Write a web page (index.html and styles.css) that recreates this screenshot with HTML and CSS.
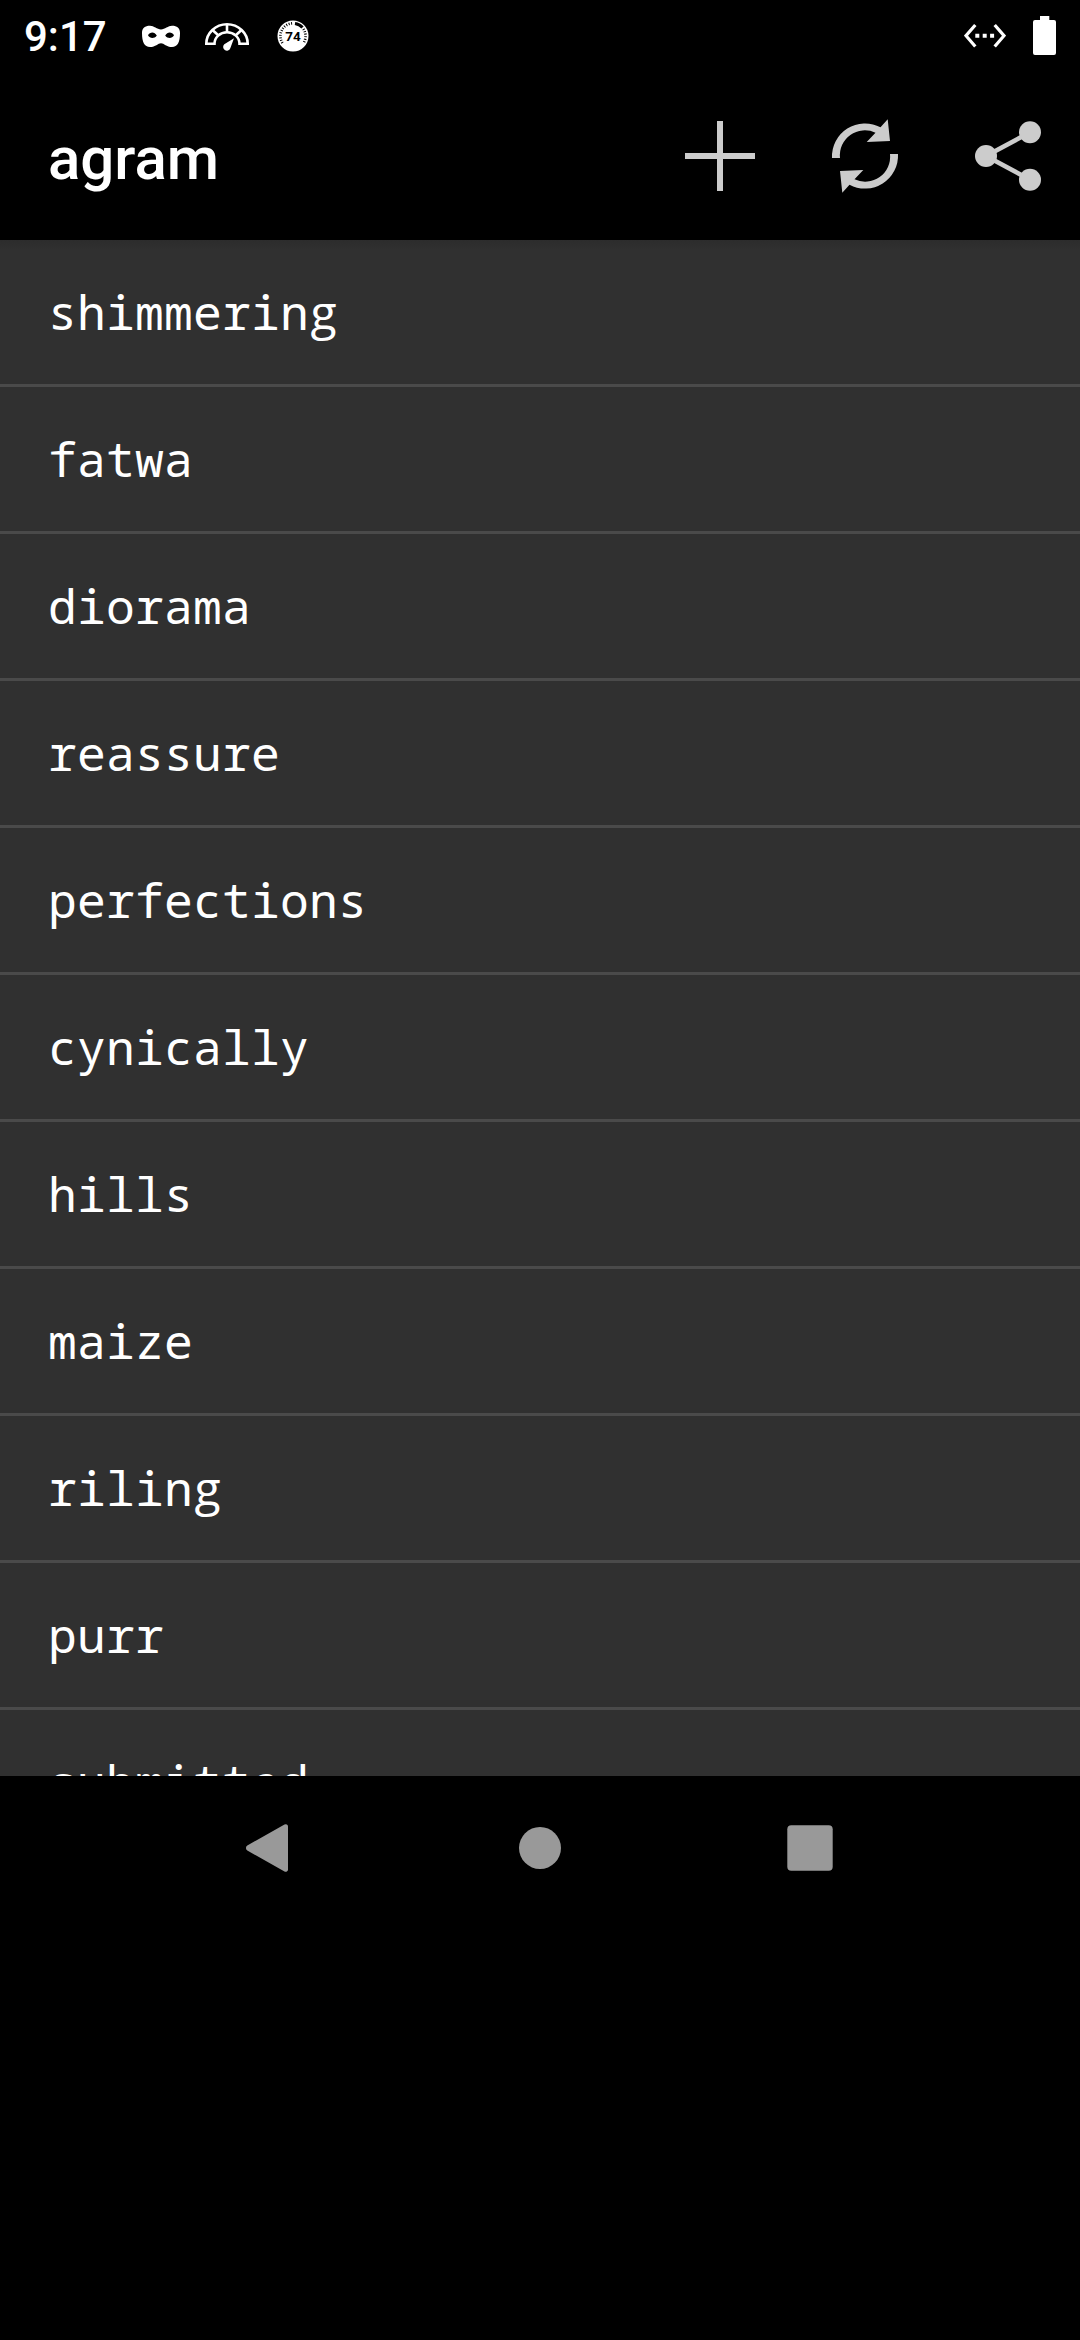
FILE: index.html
```html
<!DOCTYPE html>
<html lang="en">
<head>
<meta charset="utf-8">
<title>agram</title>
<link rel="stylesheet" href="styles.css">
</head>
<body>
<header class="status">
  <span class="clock">9:17</span>
  <svg class="mask" width="40" height="24" viewBox="0 0 40 24">
    <path fill="#fff" fill-rule="evenodd" d="M1 8C1 3 4 .8 9 .8c4 0 7 3.600 11 3.600S27 .8 31 .8c5 0 8 2.200 8 7.200 0 9-2.500 14-8 14C25.500 22 23 18.200 20 18.200S14.500 22 9 22C3.500 22 1 17 1 8ZM7 10.200c1 2 2.700 2.700 4.300 2.700s3.300-.7 4.500-2.500C14.600 8.300 13 7.400 11.300 7.400S8 8.300 7 10.200ZM24.200 10.400c1.200 1.800 2.900 2.500 4.500 2.500s3.300-.7 4.300-2.700C32 8.300 30.400 7.400 28.700 7.400s-3.300.9-4.500 3Z"/>
  </svg>
  <svg class="gauge" width="46" height="30" viewBox="0 0 46 30">
    <g fill="none" stroke="#fff" stroke-width="2.600">
      <path d="M2.300 21.800a20.700 19.500 0 0 1 41.400 0H35.500a12.500 11.500 0 0 0-25 0Z"/>
      <path d="M23 2v8M8.500 8l6 5.500M37.500 8l-6 5.500"/>
    </g>
    <path fill="#fff" d="M30 16.200 26.300 26.300a3.700 3.700 0 1 1-6-4Z"/>
  </svg>
  <svg class="badge" width="32" height="32" viewBox="0 0 32 32">
    <circle cx="16" cy="16" r="15.500" fill="#fff"/>
    <path d="M5.500 23A12.700 12.700 0 0 1 16 3.300" fill="none" stroke="#000" stroke-width="2.600" stroke-dasharray="1 1.500"/>
    <path d="M18 3.400A12.700 12.700 0 0 1 25.500 7.500" fill="none" stroke="#000" stroke-width="3"/>
    <path d="M26.400 9A12.700 12.700 0 0 1 26.500 23" fill="none" stroke="#000" stroke-width="2.600" stroke-dasharray="1 1.500"/>
    <text class="badge-text" x="16" y="21" text-anchor="middle">74</text>
  </svg>
  <span class="spacer"></span>
  <svg class="ethernet" width="42" height="26" viewBox="0 0 42 26">
    <path d="M11.300 2 2 12.700l9.300 10.800M30.700 2 40 12.700l-9.300 10.800" fill="none" stroke="#fff" stroke-width="3.200"/>
    <path d="M11.300 10.700h4v4h-4zM18.700 10.700h4v4h-4zM26.100 10.700h4v4h-4z" fill="#fff"/>
  </svg>
  <svg class="battery" width="23" height="39" viewBox="0 0 23 39">
    <path d="M7 0h9.300v4H21a2 2 0 0 1 2 2v31a2 2 0 0 1-2 2H2a2 2 0 0 1-2-2V6a2 2 0 0 1 2-2h5Z" fill="#fff"/>
  </svg>
</header>
<div class="appbar">
  <h1 class="title">agram</h1>
  <svg class="action" viewBox="0 0 144 168"><path d="M69 49h6v32h32v6H75v32h-6V87H37v-6h32Z" fill="#ccc"/></svg>
  <svg class="action" viewBox="0 0 144 168">
    <path id="arrow" d="M40 86A33 33 0 0 1 88.500 55.300L95.700 47.300 98 69 74.700 70 83.500 60.700A25 25 0 0 0 48 86Z" fill="#ccc"/>
    <use href="#arrow" transform="rotate(180 73 84)"/>
  </svg>
  <svg class="action" viewBox="0 0 144 168">
    <path d="M94 60.300 50 84l44 23.700" fill="none" stroke="#ccc" stroke-width="4.600"/>
    <g fill="#ccc"><circle cx="50" cy="84" r="11"/><circle cx="94" cy="60.300" r="11"/><circle cx="94" cy="107.700" r="11"/></g>
  </svg>
</div>
<ul class="words">
  <li class="word">shimmerin<span class="g">g</span></li>
  <li class="word">fatwa</li>
  <li class="word">diorama</li>
  <li class="word">reassure</li>
  <li class="word">perfections</li>
  <li class="word">cynically</li>
  <li class="word">hills</li>
  <li class="word">maize</li>
  <li class="word">rilin<span class="g">g</span></li>
  <li class="word">purr</li>
  <li class="word">submitted</li>
</ul>
<nav class="navbar">
  <svg class="nav-icon" viewBox="0 0 60 60"><path d="M7.300 27.500a3 3 0 0 0 0 5L44.500 53.500a2.300 2.300 0 0 0 3.500-2v-43a2.300 2.300 0 0 0-3.500-2Z" fill="#999"/></svg>
  <svg class="nav-icon" viewBox="0 0 60 60"><circle cx="30" cy="30" r="21" fill="#999"/></svg>
  <svg class="nav-icon" viewBox="0 0 60 60"><rect x="7.300" y="7.300" width="45.400" height="45.400" rx="4" fill="#999"/></svg>
</nav>
</body>
</html>
```
FILE: styles.css
```css
body {
  margin: 0;
  width: 1080px;
  height: 2340px;
  overflow: hidden;
  background: #000;
  color: #fff;
  font-family: Roboto, sans-serif;
}
svg { display: block; flex: none; }
.status {
  display: flex;
  align-items: flex-start;
  height: 72px;
}
.clock {
  box-sizing: border-box;
  width: 141px;
  padding-left: 24px;
  padding-top: 12px;
  font-size: 42px;
  line-height: 49px;
  font-weight: 500;
}
.mask { margin-top: 25px; }
.gauge { margin: 22px 0 0 23px; }
.badge { margin: 20px 0 0 27px; }
.badge-text { font-size: 13.5px; font-weight: 700; }
.spacer { flex: 1; }
.ethernet { margin: 23px 27px 0 0; }
.battery { margin: 16px 24px 0 0; }
.appbar {
  display: flex;
  align-items: center;
  height: 168px;
}
.title {
  flex: 1;
  margin: 0;
  padding: 6px 0 0 48px;
  font-size: 60px;
  line-height: 70px;
  font-weight: 500;
}
.action { width: 144px; height: 168px; }
.words {
  height: 1536px;
  margin: 0;
  padding: 0;
  overflow: hidden;
  list-style: none;
  background: linear-gradient(#2c2c2c, #303030 10px);
}
.word {
  height: 144px;
  padding-left: 48px;
  border-bottom: 3px solid #4a4a4a;
  font-family: "Droid Sans Mono", "Noto Sans Mono", "DejaVu Sans Mono", monospace;
  font-size: 48px;
  line-height: 144px;
  letter-spacing: 0.2px;
}
/* double-storey g, kept in one monospace cell */
.g {
  display: inline-block;
  width: 29px;
  text-align: center;
  line-height: 1;
  letter-spacing: 0;
  font-family: "Open Sans", sans-serif;
}
.navbar {
  display: flex;
  justify-content: center;
  align-items: center;
  gap: 210px;
  height: 144px;
}
.nav-icon { width: 60px; height: 60px; }
```
